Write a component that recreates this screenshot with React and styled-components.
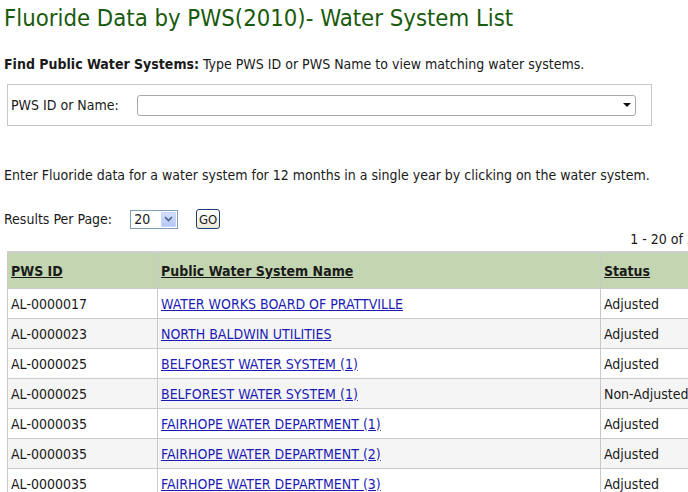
import React from "react";
import styled, { createGlobalStyle } from "styled-components";

const Global = createGlobalStyle`
  html, body { margin: 0; padding: 0; overflow: hidden; background: #fff; }
  body { font-family: "DejaVu Sans Condensed", "DejaVu Sans", sans-serif; color: #1a1a1a; font-size: 14px; }
`;

const Page = styled.div`
  width: 780px;
  padding: 0 0 0 4px;
`;

const Title = styled.h1`
  margin: 0;
  padding-top: 3px;
  font-weight: normal;
  font-size: 23.7px;
  line-height: 30px;
  color: #185a0c;
`;

const Intro = styled.p`
  margin: 23px 0 0;
  line-height: 16px;
`;

const SearchBox = styled.div`
  margin: 12px 0 0 3px;
  border: 1px solid #c6c6c6;
  display: flex;
  align-items: center;
  gap: 18px;
  padding-left: 3px;
  box-sizing: border-box;
  width: 645px;
  height: 42px;
`;

const Combo = styled.div`
  width: 499px;
  height: 21px;
  box-sizing: border-box;
  border: 1px solid #a9a9a9;
  border-radius: 3px;
  background: #fff;
  display: flex;
  justify-content: flex-end;
  align-items: center;
  padding-right: 4px;
`;

const Arrow = styled.span`
  width: 0;
  height: 0;
  border-left: 4px solid transparent;
  border-right: 4px solid transparent;
  border-top: 4px solid #111;
`;

const Instructions = styled.p`
  margin: 41px 0 0;
  line-height: 16px;
`;

const PagerRow = styled.div`
  margin-top: 26px;
  display: flex;
  align-items: center;
  height: 20px;
`;

const PerPageSelect = styled.div`
  margin-left: 18px;
  width: 48px;
  height: 19px;
  box-sizing: border-box;
  border: 1px solid #7f9db9;
  display: flex;
  align-items: center;
  padding-left: 3px;
  justify-content: space-between;
  background: #fff;
`;

const DropBtn = styled.span`
  width: 15px;
  height: 15px;
  margin-right: 1px;
  background: linear-gradient(#d2e0fd, #b4c8f5);
  border: 1px solid #c3d3fd;
  box-sizing: border-box;
  border-radius: 1px;
  display: flex;
  align-items: center;
  justify-content: center;
`;

const GoButton = styled.span`
  margin-left: 18px;
  width: 24px;
  height: 20px;
  box-sizing: border-box;
  border: 1px solid #1c3f6e;
  border-radius: 3px;
  background: linear-gradient(#fff, #ece9d8);
  display: flex;
  align-items: center;
  justify-content: center;
  font-size: 13px;
`;

const Count = styled.div`
  margin-top: 2px;
  width: 715px;
  text-align: right;
  line-height: 16px;
`;

const Table = styled.table`
  margin: 4px 0 0 3px;
  border-collapse: collapse;
  width: 712px;
`;

const HeadCell = styled.th`
  background: #c3d6b1;
  border: 1px solid #c9c9c9;
  border-top: 2px solid #cfcfcf;
  height: 34px;
  text-align: left;
  padding: 1px 3px 0;
  font-weight: bold;
  width: ${(p) => p.$w || "auto"};
  a { color: #1a1a1a; text-decoration: underline; }
`;

const Row = styled.tr`
  background: ${(p) => (p.$alt ? "#f5f5f5" : "#fff")};
`;

const Cell = styled.td`
  border: 1px solid #c9c9c9;
  height: 29px;
  padding: 0 3px;
  white-space: nowrap;
`;

const Link = styled.a`
  color: #1c1cb4;
  text-decoration: underline;
`;

const rows = [
  ["AL-0000017", "WATER WORKS BOARD OF PRATTVILLE", "Adjusted"],
  ["AL-0000023", "NORTH BALDWIN UTILITIES", "Adjusted"],
  ["AL-0000025", "BELFOREST WATER SYSTEM (1)", "Adjusted"],
  ["AL-0000025", "BELFOREST WATER SYSTEM (1)", "Non-Adjusted"],
  ["AL-0000035", "FAIRHOPE WATER DEPARTMENT (1)", "Adjusted"],
  ["AL-0000035", "FAIRHOPE WATER DEPARTMENT (2)", "Adjusted"],
  ["AL-0000035", "FAIRHOPE WATER DEPARTMENT (3)", "Adjusted"],
];

export default function App() {
  return (
    <Page>
      <Global />
      <Title>Fluoride Data by PWS(2010)- Water System List</Title>
      <Intro>
        <b>Find Public Water Systems:</b> Type PWS ID or PWS Name to view matching water systems.
      </Intro>
      <SearchBox>
        <span>PWS ID or Name:</span>
        <Combo>
          <Arrow />
        </Combo>
      </SearchBox>
      <Instructions>
        Enter Fluoride data for a water system for 12 months in a single year by clicking on the water system.
      </Instructions>
      <PagerRow>
        <span>Results Per Page:</span>
        <PerPageSelect>
          <span>20</span>
          <DropBtn>
            <svg width="9" height="6" viewBox="0 0 9 6">
              <path d="M1 1 L4.5 4.5 L8 1" stroke="#4d6185" strokeWidth="1.6" fill="none" />
            </svg>
          </DropBtn>
        </PerPageSelect>
        <GoButton>GO</GoButton>
      </PagerRow>
      <Count>1 - 20 of 2412</Count>
      <Table>
        <thead>
          <tr>
            <HeadCell $w="143px"><a>PWS ID</a></HeadCell>
            <HeadCell $w="436px"><a>Public Water System Name</a></HeadCell>
            <HeadCell><a>Status</a></HeadCell>
          </tr>
        </thead>
        <tbody>
          {rows.map((r, i) => (
            <Row key={i} $alt={i % 2 === 1}>
              <Cell>{r[0]}</Cell>
              <Cell><Link href="#">{r[1]}</Link></Cell>
              <Cell>{r[2]}</Cell>
            </Row>
          ))}
        </tbody>
      </Table>
    </Page>
  );
}
